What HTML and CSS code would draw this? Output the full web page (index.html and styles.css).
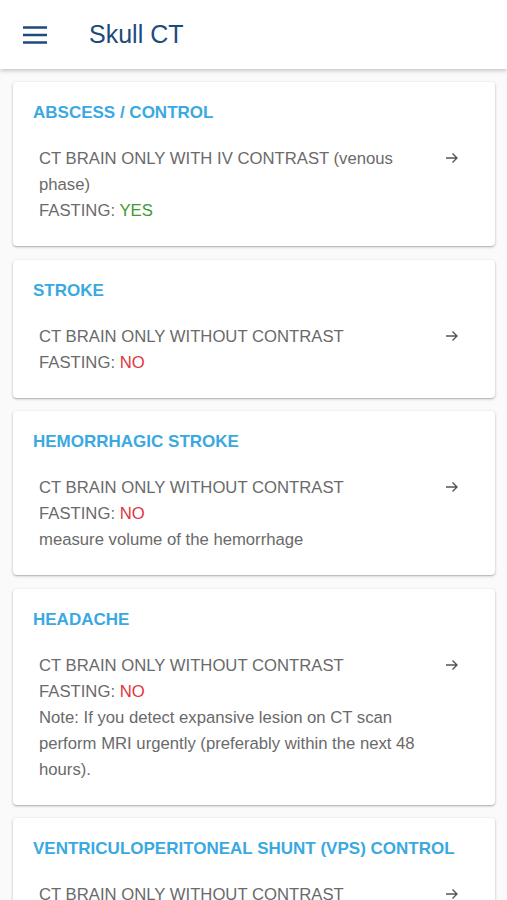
FILE: index.html
```html
<!DOCTYPE html>
<html lang="en">
<head>
  <meta charset="UTF-8" />
  <meta name="viewport" content="width=device-width, initial-scale=1.0" />
  <title>Skull CT</title>
  <link rel="stylesheet" href="styles.css">
</head>
<body>
  <header class="toolbar">
    <button class="menu-btn" aria-label="Menu">
      <svg width="24" height="24" viewBox="0 0 24 24">
        <path d="M0 4.5h24M0 12h24M0 19.5h24" stroke="currentColor" stroke-width="2.6" fill="none"/>
      </svg>
    </button>
    <h1>Skull CT</h1>
  </header>

  <main class="list">
    <div class="card">
      <h2>ABSCESS / CONTROL</h2>
      <div class="item">
        <div class="text">
          CT BRAIN ONLY WITH IV CONTRAST (venous phase)<br>
          FASTING: <span class="yes">YES</span>
        </div>
        <svg class="arrow" width="16" height="16" viewBox="0 0 16 16"><path d="M2 8h11M8.5 3.5L13 8l-4.5 4.5" stroke="currentColor" stroke-width="1.4" fill="none"/></svg>
      </div>
    </div>

    <div class="card">
      <h2>STROKE</h2>
      <div class="item">
        <div class="text">
          CT BRAIN ONLY WITHOUT CONTRAST<br>
          FASTING: <span class="no">NO</span>
        </div>
        <svg class="arrow" width="16" height="16" viewBox="0 0 16 16"><path d="M2 8h11M8.5 3.5L13 8l-4.5 4.5" stroke="currentColor" stroke-width="1.4" fill="none"/></svg>
      </div>
    </div>

    <div class="card">
      <h2>HEMORRHAGIC STROKE</h2>
      <div class="item">
        <div class="text">
          CT BRAIN ONLY WITHOUT CONTRAST<br>
          FASTING: <span class="no">NO</span><br>
          measure volume of the hemorrhage
        </div>
        <svg class="arrow" width="16" height="16" viewBox="0 0 16 16"><path d="M2 8h11M8.5 3.5L13 8l-4.5 4.5" stroke="currentColor" stroke-width="1.4" fill="none"/></svg>
      </div>
    </div>

    <div class="card">
      <h2>HEADACHE</h2>
      <div class="item">
        <div class="text">
          CT BRAIN ONLY WITHOUT CONTRAST<br>
          FASTING: <span class="no">NO</span><br>
          Note: If you detect expansive lesion on CT scan perform MRI urgently (preferably within the next 48 hours).
        </div>
        <svg class="arrow" width="16" height="16" viewBox="0 0 16 16"><path d="M2 8h11M8.5 3.5L13 8l-4.5 4.5" stroke="currentColor" stroke-width="1.4" fill="none"/></svg>
      </div>
    </div>

    <div class="card">
      <h2>VENTRICULOPERITONEAL SHUNT (VPS) CONTROL</h2>
      <div class="item">
        <div class="text">
          CT BRAIN ONLY WITHOUT CONTRAST<br>
          FASTING: <span class="no">NO</span>
        </div>
        <svg class="arrow" width="16" height="16" viewBox="0 0 16 16"><path d="M2 8h11M8.5 3.5L13 8l-4.5 4.5" stroke="currentColor" stroke-width="1.4" fill="none"/></svg>
      </div>
    </div>
  </main>
</body>
</html>
```

FILE: styles.css
```css
body {
  font-family: "Liberation Sans", Arial, sans-serif;
  background-color: #fafafa;
  margin: 0;
  padding: 0;
  overflow: hidden;
}
.toolbar {
  display: flex;
  align-items: center;
  height: 69px;
  background-color: white;
  box-shadow: 0 2px 4px rgba(0, 0, 0, 0.2);
  position: relative;
  z-index: 1;
}
.menu-btn {
  display: flex;
  border: none;
  background: none;
  padding: 0;
  margin-left: 23px;
  width: 24px;
  height: 24px;
  color: #1d4b7c;
}
.toolbar h1 {
  margin: 0 0 0 42px;
  font-size: 25px;
  font-weight: normal;
  color: #1d4b7c;
}
.list {
  padding: 13px 12px 0 13px;
}
.card {
  background-color: white;
  border-radius: 4px;
  box-shadow: 0 1px 3px rgba(0, 0, 0, 0.25), 0 1px 1px rgba(0, 0, 0, 0.1);
  padding: 20px 20px 22px 20px;
  margin-bottom: 13.5px;
}
.card h2 {
  margin: 0;
  font-size: 17px;
  line-height: 22px;
  font-weight: bold;
  color: #3aa9e2;
}
.item {
  display: flex;
  align-items: flex-start;
  margin-top: 22px;
  padding-left: 6px;
}
.text {
  flex: 1;
  font-size: 16.7px;
  line-height: 26px;
  color: #6a6a6a;
  padding-right: 4px;
}
.arrow {
  color: #555;
  margin: 4px 15px 0 6px;
}
.yes {
  color: #3d9a30;
}
.no {
  color: #e0363c;
}
```
